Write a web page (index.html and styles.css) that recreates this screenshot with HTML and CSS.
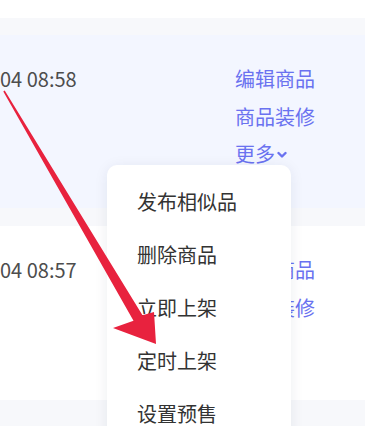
FILE: index.html
```html
<!DOCTYPE html>
<html lang="zh-CN">
<head>
<meta charset="utf-8">
<link rel="stylesheet" href="styles.css">
</head>
<body>
<div class="page">
  <div class="row row-prev"></div>
  <div class="sep"></div>
  <div class="row row-active">
    <div class="date">04 08:58</div>
    <div class="actions">
      <a class="link">编辑商品</a>
      <a class="link">商品装修</a>
      <a class="link more">更多<svg class="chev" width="10" height="8" viewBox="0 0 10 8"><path d="M1.5 2 L5 5.5 L8.5 2" fill="none" stroke="currentColor" stroke-width="2.4" stroke-linecap="round" stroke-linejoin="round"/></svg></a>
    </div>
  </div>
  <div class="sep"></div>
  <div class="row">
    <div class="date">04 08:57</div>
    <div class="actions">
      <a class="link">编辑商品</a>
      <a class="link">商品装修</a>
      <a class="link more">更多<svg class="chev" width="10" height="8" viewBox="0 0 10 8"><path d="M1.5 2 L5 5.5 L8.5 2" fill="none" stroke="currentColor" stroke-width="2.4" stroke-linecap="round" stroke-linejoin="round"/></svg></a>
    </div>
  </div>
  <div class="sep sep-last"></div>

  <div class="menu">
    <div class="menu-item">发布相似品</div>
    <div class="menu-item">删除商品</div>
    <div class="menu-item">立即上架</div>
    <div class="menu-item">定时上架</div>
    <div class="menu-item">设置预售</div>
  </div>

  <svg class="arrow" width="365" height="426" viewBox="0 0 365 426">
    <polygon fill="#e8223e" points="3.3,91.4 4.7,90.6 142.5,315.2 154,312 156,344 113,328 133.5,320.8"/>
  </svg>
</div>
</body>
</html>
```

FILE: styles.css
```css
html, body {
  margin: 0;
  padding: 0;
  background: #ffffff;
}
.page {
  position: relative;
  width: 365px;
  height: 426px;
  overflow: hidden;
  font-family: "Noto Sans CJK SC", "Noto Sans", sans-serif;
}
.row {
  height: 174px;
  background: #ffffff;
  display: flex;
  justify-content: space-between;
  align-items: flex-start;
  padding: 25px 50px 0 0;
  box-sizing: border-box;
}
.row-prev {
  height: 18px;
  padding: 0;
}
.row-active {
  height: 173px;
  background: #f3f6ff;
}
.sep {
  height: 18px;
  background: #f7f8fb;
}
.row-prev + .sep {
  height: 17px;
}
.sep-last {
  height: 30px;
}
.date {
  font-size: 20px;
  line-height: 37px;
  color: #4d4d4d;
  padding-top: 0;
}
.actions {
  display: flex;
  flex-direction: column;
}
.link {
  font-size: 20px;
  line-height: 37.5px;
  color: #6a72f0;
  display: flex;
  align-items: center;
}
.chev {
  margin-left: 2px;
  margin-top: 3px;
}
.menu {
  position: absolute;
  left: 107px;
  top: 165px;
  width: 184px;
  height: 300px;
  background: #ffffff;
  border-radius: 10px;
  box-shadow: 0 2px 14px rgba(30, 40, 80, 0.08);
  padding: 10px 0 0 30px;
  box-sizing: border-box;
}
.menu-item {
  font-size: 20px;
  line-height: 53px;
  color: #333333;
}
.arrow {
  position: absolute;
  left: 0;
  top: 0;
  pointer-events: none;
}
```
